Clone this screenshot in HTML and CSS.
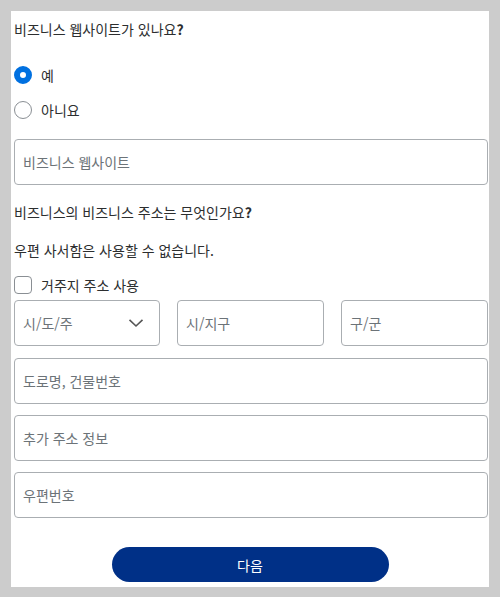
FILE: index.html
```html
<!DOCTYPE html>
<html lang="ko">
<head>
<meta charset="utf-8">
<link rel="stylesheet" href="styles.css">
</head>
<body>
<div class="panel">
  <p class="q">비즈니스 웹사이트가 있나요<b>?</b></p>
  <label class="radio-row first"><span class="radio on"></span><span>예</span></label>
  <label class="radio-row"><span class="radio"></span><span>아니요</span></label>
  <div class="field mt-web"><span class="ph">비즈니스 웹사이트</span></div>
  <p class="q q2">비즈니스의 비즈니스 주소는 무엇인가요<b>?</b></p>
  <p class="note">우편 사서함은 사용할 수 없습니다.</p>
  <label class="check-row"><span class="check"></span><span>거주지 주소 사용</span></label>
  <div class="row3">
    <div class="field select"><span class="ph">시/도/주</span>
      <svg class="chev" width="16" height="10" viewBox="0 0 16 10"><path d="M1.5 1.8 L8 8 L14.5 1.8" fill="none" stroke="#555" stroke-width="1.6"/></svg>
    </div>
    <div class="field"><span class="ph">시/지구</span></div>
    <div class="field"><span class="ph">구/군</span></div>
  </div>
  <div class="field mt-street"><span class="ph">도로명, 건물번호</span></div>
  <div class="field mt-next"><span class="ph">추가 주소 정보</span></div>
  <div class="field mt-next"><span class="ph">우편번호</span></div>
  <div class="btn-wrap"><button class="btn">다음</button></div>
</div>
</body>
</html>
```
FILE: styles.css
```css
html, body {
  margin: 0;
  padding: 0;
  background: #cccccc;
}
body {
  padding: 11px;
  font-family: "Noto Sans CJK KR", "Noto Sans", sans-serif;
  font-size: 14px;
  color: #2c2e2f;
}
.panel {
  background: #fff;
  width: 475px;
  height: 568px;
  padding: 8px 0 0 3px;
  box-sizing: content-box;
}
.q {
  margin: 0;
  line-height: 20px;
  height: 20px;
}
.q b { font-weight: 700; }
.radio-row, .check-row {
  display: flex;
  align-items: center;
  gap: 9px;
  height: 20px;
  line-height: 20px;
}
.radio-row.first { margin-top: 26px; }
.radio-row + .radio-row { margin-top: 15px; }
.radio {
  width: 18px;
  height: 18px;
  border-radius: 50%;
  box-sizing: border-box;
  border: 1px solid #8a8f94;
  background: #fff;
  flex: none;
}
.radio.on {
  border: 6px solid #0070e0;
  background: #fff;
}
.field {
  height: 46px;
  box-sizing: border-box;
  border: 1px solid #aaaeb2;
  border-radius: 4px;
  display: flex;
  align-items: center;
  padding: 0 8px;
  background: #fff;
}
.ph {
  color: #6c7378;
  font-size: 14px;
}
.mt-web { margin-top: 19px; width: 474px; }
.q2 { margin-top: 17px; }
.note { margin: 18px 0 0; line-height: 20px; height: 20px; }
.check-row { margin-top: 15px; }
.check {
  width: 18px;
  height: 18px;
  box-sizing: border-box;
  border: 1px solid #8a8f94;
  border-radius: 4px;
  flex: none;
}
.row3 {
  margin-top: 5px;
  display: grid;
  grid-template-columns: 146px 147px 147px;
  column-gap: 17px;
  width: 474px;
}
.select {
  justify-content: space-between;
  padding-right: 15px;
}
.chev { display: block; }
.mt-street { margin-top: 12px; width: 474px; }
.mt-next { margin-top: 11px; width: 474px; }
.btn-wrap {
  margin-top: 29px;
  display: flex;
  justify-content: center;
  padding-right: 3px;
}
.btn {
  width: 277px;
  height: 35px;
  border: none;
  border-radius: 18px;
  background: #003087;
  color: #fff;
  font-family: "Noto Sans CJK KR", "Noto Sans", sans-serif;
  font-size: 14px;
  padding: 0;
}
```
